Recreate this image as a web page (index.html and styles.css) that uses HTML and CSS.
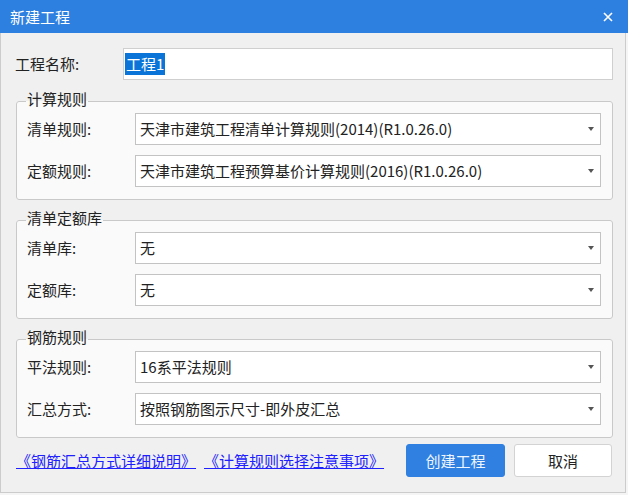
FILE: index.html
```html
<!DOCTYPE html>
<html lang="zh-CN">
<head>
<meta charset="utf-8">
<title>新建工程</title>
<link rel="stylesheet" href="styles.css">
</head>
<body>
<div class="window">
  <div class="titlebar">
    <span class="title">新建工程</span>
    <svg class="close" width="10" height="10" viewBox="0 0 10 10"><path d="M1 1L9 9M9 1L1 9" stroke="#fff" stroke-width="1.6" fill="none"/></svg>
  </div>
  <div class="content">
    <div class="row name-row">
      <span class="lbl">工程名称:</span>
      <div class="input"><span class="sel">工程1</span></div>
    </div>

    <fieldset class="group">
      <legend>计算规则</legend>
      <div class="row"><span class="lbl">清单规则:</span><div class="combo"><span class="val">天津市建筑工程清单计算规则(2014)(R1.0.26.0)</span><i class="arrow"></i></div></div>
      <div class="row"><span class="lbl">定额规则:</span><div class="combo"><span class="val">天津市建筑工程预算基价计算规则(2016)(R1.0.26.0)</span><i class="arrow"></i></div></div>
    </fieldset>

    <fieldset class="group">
      <legend>清单定额库</legend>
      <div class="row"><span class="lbl">清单库:</span><div class="combo"><span class="val">无</span><i class="arrow"></i></div></div>
      <div class="row"><span class="lbl">定额库:</span><div class="combo"><span class="val">无</span><i class="arrow"></i></div></div>
    </fieldset>

    <fieldset class="group">
      <legend>钢筋规则</legend>
      <div class="row"><span class="lbl">平法规则:</span><div class="combo"><span class="val">16系平法规则</span><i class="arrow"></i></div></div>
      <div class="row"><span class="lbl">汇总方式:</span><div class="combo"><span class="val">按照钢筋图示尺寸-即外皮汇总</span><i class="arrow"></i></div></div>
    </fieldset>

    <div class="footer">
      <a class="link" href="#">《钢筋汇总方式详细说明》</a>
      <a class="link" href="#">《计算规则选择注意事项》</a>
      <span class="spacer"></span>
      <button class="btn primary">创建工程</button>
      <button class="btn">取消</button>
    </div>
  </div>
</div>
</body>
</html>
```

FILE: styles.css
```css
html, body {
  margin: 0;
  padding: 0;
  background: #f5f5f5;
}
body {
  font-family: "Noto Sans CJK SC", "Noto Sans", sans-serif;
  font-size: 15px;
  color: #222;
}
.window {
  width: 628px;
  height: 495px;
  display: flex;
  flex-direction: column;
  background: #f5f5f5;
}
.titlebar {
  height: 33px;
  flex: none;
  background: #2e80e0;
  display: flex;
  align-items: center;
  justify-content: space-between;
  padding: 0 15px 0 10px;
  box-sizing: border-box;
}
.title {
  color: #fff;
  font-size: 15px;
  line-height: 20px;
}
.close {
  display: block;
}
.content {
  flex: 1;
  background: #f0f0f0;
  border: 1px solid #cccccc;
  border-top: none;
  margin: 0 2px 2px 0;
  padding: 0 12px 0 14px;
  display: flex;
  flex-direction: column;
}
.row {
  display: flex;
  align-items: center;
  height: 32px;
}
.row + .row {
  margin-top: 10px;
}
.lbl {
  width: 108px;
  flex: none;
  line-height: 20px;
  color: #222;
}
.name-row {
  margin-top: 15px;
}
.input {
  flex: 1;
  height: 32px;
  box-sizing: border-box;
  background: #fff;
  border: 1px solid #cfcfcf;
  display: flex;
  align-items: center;
  padding-left: 1px;
}
.sel {
  background: #0a74d8;
  color: #fff;
  line-height: 22px;
  padding: 0 1px;
}
.group {
  margin: 8px 0 0 1px;
  padding: 0 11px 12px 10px;
  border: 1px solid #c9c9c9;
  border-radius: 3px;
  background: #fafafa;
  min-width: 0;
}
.name-row + .group {
  margin-top: 9px;
}
.group legend {
  padding: 0 1px 4px;
  margin-left: -1px;
  line-height: 20px;
  color: #222;
}
.combo {
  flex: 1;
  height: 32px;
  box-sizing: border-box;
  background: #fff;
  border: 1px solid #c3c3c3;
  display: flex;
  align-items: center;
  padding: 0 6px 0 4px;
}
.val {
  flex: 1;
  line-height: 20px;
  white-space: nowrap;
}
.arrow {
  width: 0;
  height: 0;
  border-left: 3.5px solid transparent;
  border-right: 3.5px solid transparent;
  border-top: 4px solid #555;
}
.footer {
  display: flex;
  align-items: center;
  margin-top: 6px;
  padding-right: 1px;
}
.link {
  color: #2020ff;
  text-decoration: underline;
  line-height: 20px;
  margin-left: 1px;
}
.link + .link {
  margin-left: 8px;
}
.spacer {
  flex: 1;
}
.btn {
  font-family: inherit;
  font-size: 15px;
  height: 33px;
  width: 98px;
  border-radius: 3px;
  border: 1px solid #d3d3d3;
  background: #fff;
  color: #222;
  padding: 0;
  margin-left: 9px;
}
.btn.primary {
  background: #2f80e1;
  border-color: #2f80e1;
  color: #f0f6ff;
  width: 99px;
}
```
